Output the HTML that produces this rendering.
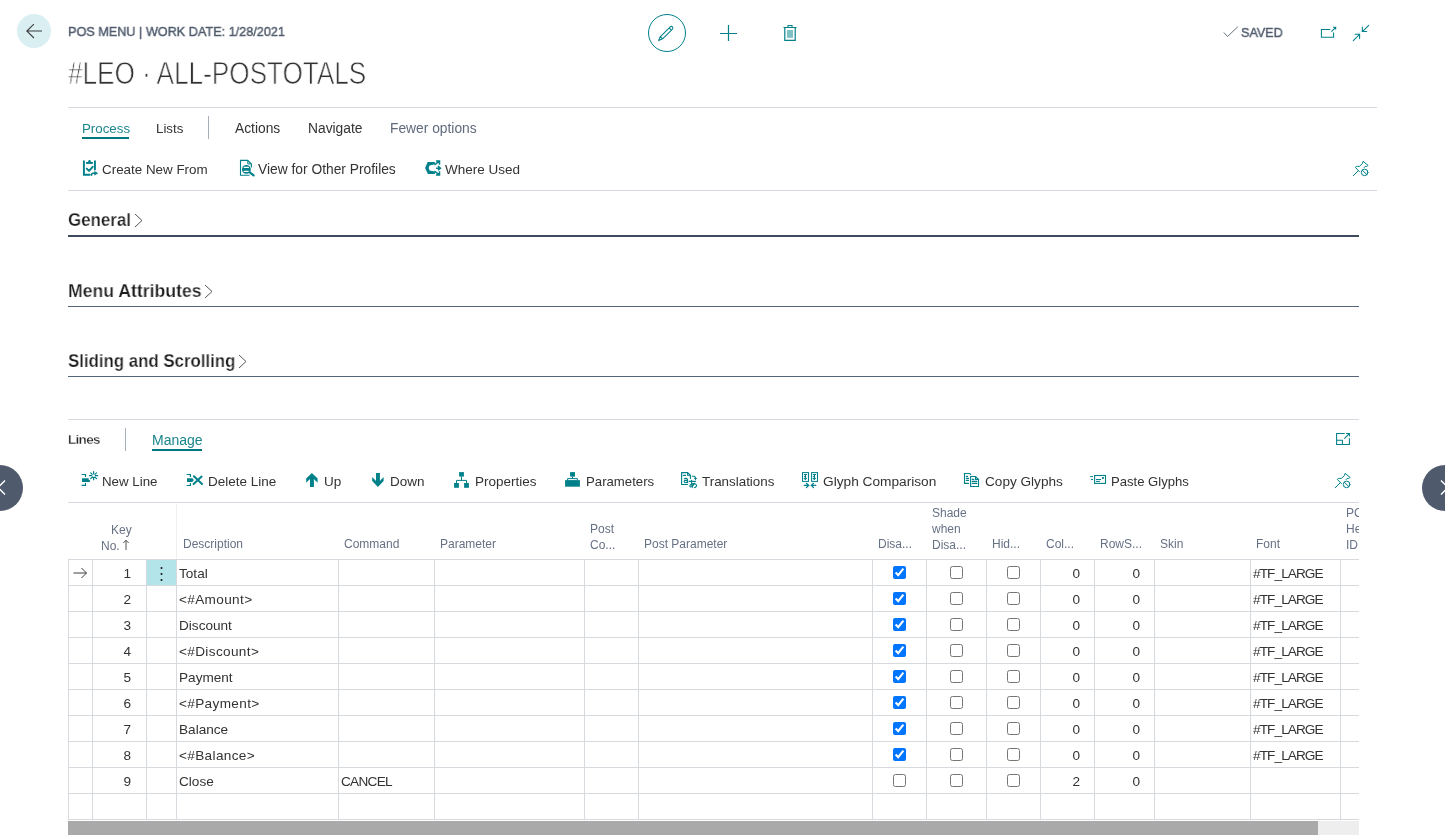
<!DOCTYPE html><html><head><meta charset="utf-8"><style>
html,body{margin:0;padding:0;background:#fff;width:1445px;height:840px;overflow:hidden;position:relative}
body{font-family:"Liberation Sans",sans-serif}
.a{position:absolute}
.t{position:absolute;line-height:1;white-space:nowrap;will-change:transform}
input[type=checkbox]{position:absolute;margin:0;width:13px;height:13px}
</style></head><body>
<div class="a" style="left:17px;top:14px;width:34px;height:34px;border-radius:50%;background:#d9eff2"></div><svg class="a" style="left:26px;top:23px" width="17" height="16" viewBox="0 0 17 16"><path d="M7.9 1.1 L0.8 8 L7.9 15 M0.8 8 H16" fill="none" stroke="#3d3d3d" stroke-width="1.1"/></svg>
<div class="t " style="left:68px;top:25.40px;font-size:13.7px;color:#505c6d;font-weight:normal;transform:scaleX(0.925);transform-origin:0 0;-webkit-text-stroke:0.45px #505c6d">POS MENU | WORK DATE: 1/28/2021</div>
<div class="t " style="left:67.8px;top:58.36px;font-size:31px;color:#333;font-weight:normal;transform:scaleX(0.843);transform-origin:0 0;-webkit-text-stroke:0.75px #fff;paint-order:normal">#LEO · ALL-POSTOTALS</div>
<div class="a" style="left:648px;top:14px;width:36px;height:36px;border-radius:50%;border:1.3px solid #00818a"></div><svg class="a" style="left:652px;top:18px" width="30" height="30" viewBox="0 0 30 30"><path d="M6.6 22.5 L8.34 18.56 L18.3 8.76 A1.6 1.6 0 0 1 20.5 11.04 L10.58 20.84 Z M8.34 18.56 L10.58 20.84 M17.1 9.9 L19.3 12.2" fill="none" stroke="#00818a" stroke-width="1.05" stroke-linejoin="round"/></svg>
<svg class="a" style="left:720px;top:25px" width="17" height="17" viewBox="0 0 17 17"><path d="M8.5 0 V16 M0 8.5 H17" stroke="#00818a" stroke-width="1.2"/></svg>
<svg class="a" style="left:783px;top:24px" width="14" height="18" viewBox="0 0 14 18"><path d="M0.5 3.5 H13.5 M5 3.5 V1.5 H9 V3.5" fill="none" stroke="#00818a" stroke-width="1.1"/><path d="M1.8 3.5 V16.3 H12.2 V3.5" fill="none" stroke="#00818a" stroke-width="1.2"/><rect x="4" y="6" width="6" height="7.8" fill="#7fc0c4"/></svg>
<svg class="a" style="left:1223px;top:26px" width="16" height="12" viewBox="0 0 16 12"><path d="M0.8 6.5 L4.5 10.5 L14.8 0.8" fill="none" stroke="#56616f" stroke-width="0.9"/></svg>
<div class="t " style="left:1241px;top:25.50px;font-size:13.7px;color:#505c6d;font-weight:normal;transform:scaleX(0.92);transform-origin:0 0;-webkit-text-stroke:0.45px #505c6d">SAVED</div>
<svg class="a" style="left:1316px;top:20px" width="24" height="24" viewBox="0 0 24 24"><g fill="none" stroke="#00818a" stroke-width="1.05"><path d="M14.3 9.4 H5.4 V17.3 H17.6 V12.6"/><path d="M15.4 11.6 L19.4 7.6 M17.1 7.3 H19.7 V9.6"/></g><path d="M17.6 7 H20 V9.4 Z" fill="#00818a"/></svg>
<svg class="a" style="left:1349px;top:20px" width="24" height="24" viewBox="0 0 24 24"><g fill="none" stroke="#00818a" stroke-width="1.05" stroke-linecap="round"><path d="M19.7 5.3 L13.7 11.3 M13.3 7.1 V11.4 H17.7"/><path d="M4.3 20.6 L10.4 14.5 M6.1 14.3 H10.6 V18.6"/></g></svg>
<div class="a" style="left:68px;top:107px;width:1309px;height:1px;background:#d5dae0"></div>
<div class="t " style="left:82px;top:122.24px;font-size:13.3px;color:#1b858d;font-weight:normal;">Process</div>
<div class="a" style="left:82px;top:137px;width:47px;height:2px;background:#00767e"></div>
<div class="t " style="left:155.8px;top:122.24px;font-size:13.3px;color:#333;font-weight:normal;">Lists</div>
<div class="a" style="left:208px;top:116px;width:1px;height:23px;background:#a6aeb9"></div>
<div class="t " style="left:235px;top:121.82px;font-size:13.8px;color:#333;font-weight:normal;">Actions</div>
<div class="t " style="left:308px;top:121.82px;font-size:13.8px;color:#333;font-weight:normal;">Navigate</div>
<div class="t " style="left:390px;top:121.82px;font-size:13.8px;color:#5f6b7c;font-weight:normal;">Fewer options</div>
<svg class="a" style="left:82px;top:159px" width="17" height="18" viewBox="0 0 17 18"><path d="M1.9 2.3 V15.8 H7.8" fill="none" stroke="#00818a" stroke-width="1.9" stroke-linecap="round"/><path d="M12.95 2.3 V10.5" stroke="#00818a" stroke-width="1.9" stroke-linecap="round"/><rect x="4" y="3" width="6.9" height="1.9" fill="#00818a"/><path d="M5.9 3.2 Q6 1 7.5 1 Q9 1 9.1 3.2 Z" fill="#00818a"/><path d="M4.7 9.6 L7 11.9 L10.7 7.8" fill="none" stroke="#00818a" stroke-width="1.9" stroke-linecap="round" stroke-linejoin="round"/><path d="M9.6 16.7 V15.6 Q9.6 14.3 11 14.3 H14.5" fill="none" stroke="#00818a" stroke-width="1.5"/><path d="M12.3 12 L16.2 14.3 L12.3 16.6 Z" fill="#00818a"/></svg>
<div class="t " style="left:102px;top:162.76px;font-size:13.4px;color:#333;font-weight:normal;">Create New From</div>
<svg class="a" style="left:239px;top:159px" width="16" height="18" viewBox="0 0 16 18"><path d="M10.5 16.3 H1.5 V1.4 H8.7 L12.4 5 V8.5" fill="none" stroke="#00818a" stroke-width="1.1"/><path d="M8.8 1.6 V4.9 H12.2" fill="none" stroke="#00818a" stroke-width="1"/><circle cx="7.4" cy="10.4" r="4.4" fill="#00818a"/><path d="M5.2 8.4 H9.6 M5.2 12.4 H9.6" stroke="#fff" stroke-width="1.1" stroke-linecap="round"/><path d="M10.4 13.2 L14.6 16.3" stroke="#00818a" stroke-width="2.2" stroke-linecap="round"/></svg>
<div class="t " style="left:257.5px;top:162.82px;font-size:13.8px;color:#333;font-weight:normal;">View for Other Profiles</div>
<svg class="a" style="left:422px;top:155px" width="24" height="24" viewBox="0 0 24 24"><path d="M5.7 7 H12.9 L12.9 18.9 H5.9 L3.1 12.9 Z" fill="#00818a"/><circle cx="9.8" cy="12.9" r="3" fill="#fff"/><path d="M9.8 10.3 L13.5 8.6 V17.2 L9.8 15.5 Z" fill="#fff"/><path d="M12.4 9.8 L17.4 6.2 M14 6.1 H17.5 V9.7 M14.1 13.2 H18.4 M16 11.2 L18.4 13.2 L16 15.3 M12.4 16.2 L17.4 19.8 M14 19.9 H17.5 V16.3" fill="none" stroke="#00818a" stroke-width="1.5"/></svg>
<div class="t " style="left:444.5px;top:162.67px;font-size:13.5px;color:#333;font-weight:normal;">Where Used</div>
<svg class="a" style="left:1348px;top:156px" width="24" height="24" viewBox="0 0 24 24"><g fill="none" stroke="#00818a" stroke-width="1" stroke-linecap="round" stroke-linejoin="round"><path d="M5.3 19.7 L10.3 14.7"/><path d="M11.4 15.6 L7.3 11.4 Q8 10.4 9.2 10.4 H11.4 L14.4 7.6 L15.1 5.3 L20 9.4 Q19.5 10.4 18.5 10.4 H17.1 L16.1 11.6"/><circle cx="16.6" cy="16.4" r="3.3"/><path d="M14.4 14.3 L18.8 18.5"/></g></svg>
<div class="a" style="left:68px;top:190px;width:1309px;height:1px;background:#d5dae0"></div>
<div class="t " style="left:67.5px;top:210.96px;font-size:18px;color:#1c1c1c;font-weight:bold;transform:scaleX(0.94);transform-origin:0 0;-webkit-text-stroke:0.25px #fff">General</div>
<svg class="a" style="left:134px;top:213px" width="9" height="15" viewBox="0 0 9 15"><path d="M1 1 L8 7.5 L1 14" fill="none" stroke="#555" stroke-width="1"/></svg>
<div class="a" style="left:68px;top:235px;width:1291px;height:2px;background:#3e4b5e"></div>
<div class="t " style="left:68px;top:281.76px;font-size:18px;color:#1c1c1c;font-weight:bold;transform:scaleX(0.98);transform-origin:0 0;-webkit-text-stroke:0.25px #fff">Menu Attributes</div>
<svg class="a" style="left:204px;top:284px" width="9" height="15" viewBox="0 0 9 15"><path d="M1 1 L8 7.5 L1 14" fill="none" stroke="#555" stroke-width="1"/></svg>
<div class="a" style="left:68px;top:306px;width:1291px;height:1px;background:#56647a"></div>
<div class="t " style="left:68px;top:351.76px;font-size:18px;color:#1c1c1c;font-weight:bold;transform:scaleX(0.935);transform-origin:0 0;-webkit-text-stroke:0.25px #fff">Sliding and Scrolling</div>
<svg class="a" style="left:238px;top:354px" width="9" height="15" viewBox="0 0 9 15"><path d="M1 1 L8 7.5 L1 14" fill="none" stroke="#555" stroke-width="1"/></svg>
<div class="a" style="left:68px;top:376px;width:1291px;height:1px;background:#56647a"></div>
<div class="a" style="left:68px;top:419px;width:1291px;height:1px;background:#d5dae0"></div>
<div class="t " style="left:68px;top:432.57px;font-size:13.5px;color:#262626;font-weight:bold;letter-spacing:-0.7px;-webkit-text-stroke:0.3px #fff">Lines</div>
<div class="a" style="left:125px;top:428px;width:1px;height:23px;background:#a6aeb9"></div>
<div class="t " style="left:151.6px;top:433.35px;font-size:14px;color:#1b858d;font-weight:normal;">Manage</div>
<div class="a" style="left:152px;top:449px;width:50px;height:2px;background:#00767e"></div>
<svg class="a" style="left:1330px;top:426px" width="24" height="24" viewBox="0 0 24 24"><g fill="none" stroke="#00818a" stroke-width="1.05"><path d="M14.7 7.4 H6.6 V18.4 H19.4 V12.3"/><path d="M6.6 14.3 H12.4 V18.4"/><path d="M14.3 12.6 L19 7.9 M16.1 7.4 H19.4 V10.6"/></g></svg>
<svg class="a" style="left:80px;top:469px" width="24" height="20" viewBox="0 0 24 20"><path d="M2.1 5.5 H5.5 V7.4 M2.1 16.4 H5.5 V14.4" fill="none" stroke="#00818a" stroke-width="1.2" stroke-linecap="round"/><path d="M2 9.2 H8.7 V11.1 H9.9 V13 H2 Z" fill="#00818a"/><path d="M13.6 2.6 V10.8 M9.5 6.7 H17.7 M10.7 3.8 L16.5 9.6 M16.5 3.8 L10.7 9.6" stroke="#00818a" stroke-width="1.2" stroke-linecap="round"/><circle cx="13.6" cy="6.7" r="1.4" fill="#fff"/></svg>
<div class="t " style="left:102px;top:474.94px;font-size:13.3px;color:#333;font-weight:normal;">New Line</div>
<svg class="a" style="left:184px;top:469px" width="24" height="20" viewBox="0 0 24 20"><path d="M3.1 5.5 H6.4 V7.4 M3.1 16.5 H6.4 V14.5" fill="none" stroke="#00818a" stroke-width="1.2" stroke-linecap="round"/><path d="M3 9.2 H8.3 L9.9 11 L8.3 12.9 H3 Z" fill="#00818a"/><path d="M9.9 7.2 L18 15 M17.6 7.6 L9.6 15" stroke="#00818a" stroke-width="2" stroke-linecap="round"/></svg>
<div class="t " style="left:207.5px;top:474.77px;font-size:13.5px;color:#333;font-weight:normal;">Delete Line</div>
<svg class="a" style="left:300px;top:469px" width="24" height="20" viewBox="0 0 24 20"><path d="M11.9 4 L17.6 9.5 V13.8 L13.9 9.9 V17.9 H10 V9.9 L6.2 13.8 V9.5 Z" fill="#00818a"/></svg>
<div class="t " style="left:324px;top:474.77px;font-size:13.5px;color:#333;font-weight:normal;">Up</div>
<svg class="a" style="left:366px;top:469px" width="24" height="20" viewBox="0 0 24 20"><path d="M10 4 H13.9 V11.9 L17.6 8.1 V12.1 L11.9 17.9 L6.2 12.1 V8.1 L10 11.9 Z" fill="#00818a"/></svg>
<div class="t " style="left:390px;top:474.77px;font-size:13.5px;color:#333;font-weight:normal;">Down</div>
<svg class="a" style="left:450px;top:469px" width="24" height="20" viewBox="0 0 24 20"><rect x="9.1" y="3.1" width="4.8" height="4.5" fill="#00818a"/><path d="M11.5 7.5 V11.4 M6.5 14.2 V11.4 H16.5 V14.2" fill="none" stroke="#00818a" stroke-width="1"/><rect x="4.1" y="14" width="4.8" height="4.8" fill="#00818a"/><rect x="14.1" y="14" width="4.8" height="4.8" fill="#00818a"/></svg>
<div class="t " style="left:474.5px;top:474.77px;font-size:13.5px;color:#333;font-weight:normal;">Properties</div>
<svg class="a" style="left:562px;top:469px" width="24" height="20" viewBox="0 0 24 20"><rect x="8.1" y="3.1" width="4.9" height="4.5" fill="#00818a"/><path d="M10.5 7.5 V9.6 M5.6 11.2 V9.6 H15.4 V11.2" fill="none" stroke="#00818a" stroke-width="1"/><rect x="3.1" y="11.1" width="14.8" height="6.6" fill="#00818a"/></svg>
<div class="t " style="left:585.5px;top:475.03px;font-size:13.2px;color:#333;font-weight:normal;">Parameters</div>
<svg class="a" style="left:678px;top:469px" width="24" height="20" viewBox="0 0 24 20"><g fill="none" stroke="#00818a" stroke-width="1.1" stroke-linecap="round"><path d="M9.5 15.5 H3.6 V3.6 H9.6 L12.4 6.3 V9.5"/><path d="M9.6 3.8 V6.2 H12.2"/><path d="M5.1 6.4 H7.6"/><path d="M6.4 9.8 Q7.5 9.1 8.6 9.5 Q9.6 9.9 9.6 11 V13.8 M9.6 11.4 H7.5 Q6.1 11.4 6.1 12.5 Q6.1 13.7 7.5 13.7 Q9 13.7 9.6 12.6"/><path d="M14.3 7.3 H16.3 L17.5 8.5 M16.5 9.5 H18.5 M17.5 8.5 V10.5"/><path d="M11.3 12.4 H17.6 M13.5 11.2 C13.4 14 13.6 16.5 14.6 18.3 M16.3 14.3 C15 17.5 12.5 18.6 11.9 17.4 C11.3 16 13.5 14.6 15.6 14.6 C17.8 14.6 18.8 15.8 18.5 17 C18.2 18 17.3 18.5 16.5 18.7"/></g></svg>
<div class="t " style="left:701.5px;top:474.86px;font-size:13.4px;color:#333;font-weight:normal;">Translations</div>
<svg class="a" style="left:798px;top:469px" width="24" height="20" viewBox="0 0 24 20"><g fill="none" stroke="#00818a" stroke-width="1" stroke-linecap="round"><rect x="4.5" y="3.6" width="6" height="8.8"/><rect x="13.6" y="3.6" width="5.9" height="8.8"/><path d="M6.3 5.5 H8.7 M7.5 5.5 V10.3 M6.3 7.4 H7.5 M6.3 9.3 H8.7 L7.5 10.5 Z M15.3 5.5 H17.7 M16.5 5.5 V10.3 M15.3 7.4 H16.5 M15.3 9.3 H17.7 L16.5 10.5 Z"/></g><g fill="none" stroke="#00818a" stroke-width="1.2" stroke-linecap="round" stroke-linejoin="round"><path d="M6.2 16.4 H10.8 M8.4 14.3 L10.8 16.4 L8.4 18.5 M13.2 16.4 H17.8 M15.5 14.3 L13.2 16.4 L15.5 18.5"/></g></svg>
<div class="t " style="left:822.5px;top:474.60px;font-size:13.7px;color:#333;font-weight:normal;">Glyph Comparison</div>
<svg class="a" style="left:960px;top:469px" width="24" height="20" viewBox="0 0 24 20"><g fill="none" stroke="#00818a" stroke-width="1.1" stroke-linecap="round"><path d="M8.5 14.4 H4.5 V4.5 H9.6 L10.8 5.5"/><path d="M6.3 7.4 H7.6 M6.3 9.4 H8.6 M6.3 11.4 H8.6"/><path d="M10.6 7.5 H15.5 L18.5 10.5 V17.5 H10.6 Z"/><path d="M15.5 7.6 V10.4 H18.4"/><path d="M12.3 10.4 H13.7 M12.3 12.4 H16.8 M12.3 14.4 H16.8"/></g></svg>
<div class="t " style="left:984.5px;top:474.69px;font-size:13.6px;color:#333;font-weight:normal;">Copy Glyphs</div>
<svg class="a" style="left:1086px;top:469px" width="24" height="20" viewBox="0 0 24 20"><g fill="none" stroke="#00818a" stroke-linecap="round"><rect x="8.6" y="6.5" width="10.9" height="7.9" stroke-width="1.1"/><path d="M4.5 7.6 H6.6 M5.4 10.5 H6.6 M10.4 10.5 H14.6 M10.4 12.4 H13.6" stroke-width="1"/></g><rect x="16" y="8.1" width="1.9" height="1.8" rx="0.3" fill="#00818a"/></svg>
<div class="t " style="left:1110.5px;top:475.11px;font-size:13.1px;color:#333;font-weight:normal;">Paste Glyphs</div>
<svg class="a" style="left:1330px;top:468px" width="24" height="24" viewBox="0 0 24 24"><g fill="none" stroke="#00818a" stroke-width="1" stroke-linecap="round" stroke-linejoin="round"><path d="M5.3 19.7 L10.3 14.7"/><path d="M11.4 15.6 L7.3 11.4 Q8 10.4 9.2 10.4 H11.4 L14.4 7.6 L15.1 5.3 L20 9.4 Q19.5 10.4 18.5 10.4 H17.1 L16.1 11.6"/><circle cx="16.6" cy="16.4" r="3.3"/><path d="M14.4 14.3 L18.8 18.5"/></g></svg>
<div class="a" style="left:68px;top:502px;width:1291px;height:1px;background:#d5dae0"></div>
<div class="a" style="left:0;top:0;width:1359px;height:840px;overflow:hidden">
<div class="t " style="left:111.2px;top:523.64px;font-size:12px;color:#667184;font-weight:normal;">Key</div>
<div class="t " style="left:100.6px;top:539.54px;font-size:12px;color:#667184;font-weight:normal;">No.</div>
<svg class="a" style="left:122px;top:539px" width="8" height="12" viewBox="0 0 8 12"><path d="M4 11 V1.3 M1.3 4 L4 1.2 L6.7 4" fill="none" stroke="#555" stroke-width="1"/></svg>
<div class="a" style="left:176px;top:504px;width:1px;height:55px;background:#efefef"></div>
<div class="t " style="left:182.5px;top:537.84px;font-size:12px;color:#667184;font-weight:normal;">Description</div>
<div class="t " style="left:344px;top:537.84px;font-size:12px;color:#667184;font-weight:normal;">Command</div>
<div class="t " style="left:440px;top:537.84px;font-size:12px;color:#667184;font-weight:normal;">Parameter</div>
<div class="t " style="left:590px;top:523.44px;font-size:12px;color:#667184;font-weight:normal;">Post</div>
<div class="t " style="left:590px;top:539.44px;font-size:12px;color:#667184;font-weight:normal;">Co...</div>
<div class="t " style="left:644px;top:537.84px;font-size:12px;color:#667184;font-weight:normal;">Post Parameter</div>
<div class="t " style="left:878px;top:537.84px;font-size:12px;color:#667184;font-weight:normal;">Disa...</div>
<div class="t " style="left:932px;top:507.44px;font-size:12px;color:#667184;font-weight:normal;">Shade</div>
<div class="t " style="left:932px;top:523.44px;font-size:12px;color:#667184;font-weight:normal;">when</div>
<div class="t " style="left:932px;top:539.44px;font-size:12px;color:#667184;font-weight:normal;">Disa...</div>
<div class="t " style="left:992px;top:537.84px;font-size:12px;color:#667184;font-weight:normal;">Hid...</div>
<div class="t " style="left:1046px;top:537.84px;font-size:12px;color:#667184;font-weight:normal;">Col...</div>
<div class="t " style="left:1100px;top:537.84px;font-size:12px;color:#667184;font-weight:normal;">RowS...</div>
<div class="t " style="left:1160px;top:537.84px;font-size:12px;color:#667184;font-weight:normal;">Skin</div>
<div class="t " style="left:1256px;top:537.84px;font-size:12px;color:#667184;font-weight:normal;">Font</div>
<div class="t " style="left:1346px;top:507.44px;font-size:12px;color:#667184;font-weight:normal;">PC</div>
<div class="t " style="left:1346px;top:523.44px;font-size:12px;color:#667184;font-weight:normal;">He</div>
<div class="t " style="left:1346px;top:539.44px;font-size:12px;color:#667184;font-weight:normal;">ID</div>
<div class="a" style="left:147px;top:560px;width:29px;height:25px;background:#b2e4ea"></div><svg class="a" style="left:159px;top:566px" width="5" height="16" viewBox="0 0 5 16"><circle cx="2.5" cy="2" r="1" fill="#111"/><circle cx="2.5" cy="8" r="1" fill="#111"/><circle cx="2.5" cy="14" r="1" fill="#111"/></svg>
<svg class="a" style="left:73px;top:567px" width="15" height="12" viewBox="0 0 15 12"><path d="M8.5 1 L13.5 6 L8.5 11 M0.5 6 H13.5" fill="none" stroke="#3d3d3d" stroke-width="1"/></svg>
<div class="a" style="left:68px;top:559px;width:1291px;height:1px;background:#d6d9de"></div>
<div class="a" style="left:68px;top:585px;width:1291px;height:1px;background:#d6d9de"></div>
<div class="a" style="left:68px;top:611px;width:1291px;height:1px;background:#d6d9de"></div>
<div class="a" style="left:68px;top:637px;width:1291px;height:1px;background:#d6d9de"></div>
<div class="a" style="left:68px;top:663px;width:1291px;height:1px;background:#d6d9de"></div>
<div class="a" style="left:68px;top:689px;width:1291px;height:1px;background:#d6d9de"></div>
<div class="a" style="left:68px;top:715px;width:1291px;height:1px;background:#d6d9de"></div>
<div class="a" style="left:68px;top:741px;width:1291px;height:1px;background:#d6d9de"></div>
<div class="a" style="left:68px;top:767px;width:1291px;height:1px;background:#d6d9de"></div>
<div class="a" style="left:68px;top:793px;width:1291px;height:1px;background:#d6d9de"></div>
<div class="a" style="left:68px;top:819px;width:1291px;height:1px;background:#d6d9de"></div>
<div class="a" style="left:68px;top:559px;width:1px;height:261px;background:#d6d9de"></div>
<div class="a" style="left:92px;top:559px;width:1px;height:261px;background:#d6d9de"></div>
<div class="a" style="left:146px;top:559px;width:1px;height:261px;background:#d6d9de"></div>
<div class="a" style="left:176px;top:559px;width:1px;height:261px;background:#d6d9de"></div>
<div class="a" style="left:338px;top:559px;width:1px;height:261px;background:#d6d9de"></div>
<div class="a" style="left:434px;top:559px;width:1px;height:261px;background:#d6d9de"></div>
<div class="a" style="left:584px;top:559px;width:1px;height:261px;background:#d6d9de"></div>
<div class="a" style="left:638px;top:559px;width:1px;height:261px;background:#d6d9de"></div>
<div class="a" style="left:872px;top:559px;width:1px;height:261px;background:#d6d9de"></div>
<div class="a" style="left:926px;top:559px;width:1px;height:261px;background:#d6d9de"></div>
<div class="a" style="left:986px;top:559px;width:1px;height:261px;background:#d6d9de"></div>
<div class="a" style="left:1040px;top:559px;width:1px;height:261px;background:#d6d9de"></div>
<div class="a" style="left:1094px;top:559px;width:1px;height:261px;background:#d6d9de"></div>
<div class="a" style="left:1154px;top:559px;width:1px;height:261px;background:#d6d9de"></div>
<div class="a" style="left:1250px;top:559px;width:1px;height:261px;background:#d6d9de"></div>
<div class="a" style="left:1340px;top:559px;width:1px;height:261px;background:#d6d9de"></div>
<div class="t" style="left:131px;transform:translateX(-100%);top:567.09px;font-size:13.6px;color:#333">1</div>
<div class="t " style="left:178.8px;top:567.09px;font-size:13.6px;color:#333;font-weight:normal;">Total</div>
<input type="checkbox" style="left:893px;top:566px" checked><input type="checkbox" style="left:950px;top:566px"><input type="checkbox" style="left:1007px;top:566px"><div class="t" style="left:1080px;transform:translateX(-100%);top:567.09px;font-size:13.6px;color:#333">0</div>
<div class="t" style="left:1140px;transform:translateX(-100%);top:567.09px;font-size:13.6px;color:#333">0</div>
<div class="t " style="left:1253px;top:567.09px;font-size:13.6px;color:#333;font-weight:normal;letter-spacing:-0.9px">#TF_LARGE</div>
<div class="t" style="left:131px;transform:translateX(-100%);top:593.09px;font-size:13.6px;color:#333">2</div>
<div class="t " style="left:178.8px;top:593.09px;font-size:13.6px;color:#333;font-weight:normal;letter-spacing:0.35px">&lt;#Amount&gt;</div>
<input type="checkbox" style="left:893px;top:592px" checked><input type="checkbox" style="left:950px;top:592px"><input type="checkbox" style="left:1007px;top:592px"><div class="t" style="left:1080px;transform:translateX(-100%);top:593.09px;font-size:13.6px;color:#333">0</div>
<div class="t" style="left:1140px;transform:translateX(-100%);top:593.09px;font-size:13.6px;color:#333">0</div>
<div class="t " style="left:1253px;top:593.09px;font-size:13.6px;color:#333;font-weight:normal;letter-spacing:-0.9px">#TF_LARGE</div>
<div class="t" style="left:131px;transform:translateX(-100%);top:619.09px;font-size:13.6px;color:#333">3</div>
<div class="t " style="left:178.8px;top:619.09px;font-size:13.6px;color:#333;font-weight:normal;">Discount</div>
<input type="checkbox" style="left:893px;top:618px" checked><input type="checkbox" style="left:950px;top:618px"><input type="checkbox" style="left:1007px;top:618px"><div class="t" style="left:1080px;transform:translateX(-100%);top:619.09px;font-size:13.6px;color:#333">0</div>
<div class="t" style="left:1140px;transform:translateX(-100%);top:619.09px;font-size:13.6px;color:#333">0</div>
<div class="t " style="left:1253px;top:619.09px;font-size:13.6px;color:#333;font-weight:normal;letter-spacing:-0.9px">#TF_LARGE</div>
<div class="t" style="left:131px;transform:translateX(-100%);top:645.09px;font-size:13.6px;color:#333">4</div>
<div class="t " style="left:178.8px;top:645.09px;font-size:13.6px;color:#333;font-weight:normal;letter-spacing:0.35px">&lt;#Discount&gt;</div>
<input type="checkbox" style="left:893px;top:644px" checked><input type="checkbox" style="left:950px;top:644px"><input type="checkbox" style="left:1007px;top:644px"><div class="t" style="left:1080px;transform:translateX(-100%);top:645.09px;font-size:13.6px;color:#333">0</div>
<div class="t" style="left:1140px;transform:translateX(-100%);top:645.09px;font-size:13.6px;color:#333">0</div>
<div class="t " style="left:1253px;top:645.09px;font-size:13.6px;color:#333;font-weight:normal;letter-spacing:-0.9px">#TF_LARGE</div>
<div class="t" style="left:131px;transform:translateX(-100%);top:671.09px;font-size:13.6px;color:#333">5</div>
<div class="t " style="left:178.8px;top:671.09px;font-size:13.6px;color:#333;font-weight:normal;">Payment</div>
<input type="checkbox" style="left:893px;top:670px" checked><input type="checkbox" style="left:950px;top:670px"><input type="checkbox" style="left:1007px;top:670px"><div class="t" style="left:1080px;transform:translateX(-100%);top:671.09px;font-size:13.6px;color:#333">0</div>
<div class="t" style="left:1140px;transform:translateX(-100%);top:671.09px;font-size:13.6px;color:#333">0</div>
<div class="t " style="left:1253px;top:671.09px;font-size:13.6px;color:#333;font-weight:normal;letter-spacing:-0.9px">#TF_LARGE</div>
<div class="t" style="left:131px;transform:translateX(-100%);top:697.09px;font-size:13.6px;color:#333">6</div>
<div class="t " style="left:178.8px;top:697.09px;font-size:13.6px;color:#333;font-weight:normal;letter-spacing:0.35px">&lt;#Payment&gt;</div>
<input type="checkbox" style="left:893px;top:696px" checked><input type="checkbox" style="left:950px;top:696px"><input type="checkbox" style="left:1007px;top:696px"><div class="t" style="left:1080px;transform:translateX(-100%);top:697.09px;font-size:13.6px;color:#333">0</div>
<div class="t" style="left:1140px;transform:translateX(-100%);top:697.09px;font-size:13.6px;color:#333">0</div>
<div class="t " style="left:1253px;top:697.09px;font-size:13.6px;color:#333;font-weight:normal;letter-spacing:-0.9px">#TF_LARGE</div>
<div class="t" style="left:131px;transform:translateX(-100%);top:723.09px;font-size:13.6px;color:#333">7</div>
<div class="t " style="left:178.8px;top:723.09px;font-size:13.6px;color:#333;font-weight:normal;">Balance</div>
<input type="checkbox" style="left:893px;top:722px" checked><input type="checkbox" style="left:950px;top:722px"><input type="checkbox" style="left:1007px;top:722px"><div class="t" style="left:1080px;transform:translateX(-100%);top:723.09px;font-size:13.6px;color:#333">0</div>
<div class="t" style="left:1140px;transform:translateX(-100%);top:723.09px;font-size:13.6px;color:#333">0</div>
<div class="t " style="left:1253px;top:723.09px;font-size:13.6px;color:#333;font-weight:normal;letter-spacing:-0.9px">#TF_LARGE</div>
<div class="t" style="left:131px;transform:translateX(-100%);top:749.09px;font-size:13.6px;color:#333">8</div>
<div class="t " style="left:178.8px;top:749.09px;font-size:13.6px;color:#333;font-weight:normal;letter-spacing:0.35px">&lt;#Balance&gt;</div>
<input type="checkbox" style="left:893px;top:748px" checked><input type="checkbox" style="left:950px;top:748px"><input type="checkbox" style="left:1007px;top:748px"><div class="t" style="left:1080px;transform:translateX(-100%);top:749.09px;font-size:13.6px;color:#333">0</div>
<div class="t" style="left:1140px;transform:translateX(-100%);top:749.09px;font-size:13.6px;color:#333">0</div>
<div class="t " style="left:1253px;top:749.09px;font-size:13.6px;color:#333;font-weight:normal;letter-spacing:-0.9px">#TF_LARGE</div>
<div class="t" style="left:131px;transform:translateX(-100%);top:775.09px;font-size:13.6px;color:#333">9</div>
<div class="t " style="left:178.8px;top:775.09px;font-size:13.6px;color:#333;font-weight:normal;">Close</div>
<div class="t " style="left:340.8px;top:775.09px;font-size:13.6px;color:#333;font-weight:normal;letter-spacing:-0.7px">CANCEL</div>
<input type="checkbox" style="left:893px;top:774px" ><input type="checkbox" style="left:950px;top:774px"><input type="checkbox" style="left:1007px;top:774px"><div class="t" style="left:1080px;transform:translateX(-100%);top:775.09px;font-size:13.6px;color:#333">2</div>
<div class="t" style="left:1140px;transform:translateX(-100%);top:775.09px;font-size:13.6px;color:#333">0</div>
</div>
<div class="a" style="left:68px;top:821px;width:1291px;height:14px;background:#eeeeee"></div><div class="a" style="left:68px;top:821px;width:1250px;height:14px;background:#a9a9a9"></div><div class="a" style="left:-23px;top:465px;width:46px;height:46px;border-radius:50%;background:#4f5b6d"></div><svg class="a" style="left:0px;top:479px" width="8" height="18" viewBox="0 0 8 18"><path d="M5 1.5 L-2 8.5 L5 15.5" fill="none" stroke="#fff" stroke-width="1.5"/></svg>
<div class="a" style="left:1422px;top:465px;width:46px;height:46px;border-radius:50%;background:#4f5b6d"></div><svg class="a" style="left:1437px;top:479px" width="8" height="18" viewBox="0 0 8 18"><path d="M4 1.5 L11 8.5 L4 15.5" fill="none" stroke="#fff" stroke-width="1.5"/></svg>
</body></html>
